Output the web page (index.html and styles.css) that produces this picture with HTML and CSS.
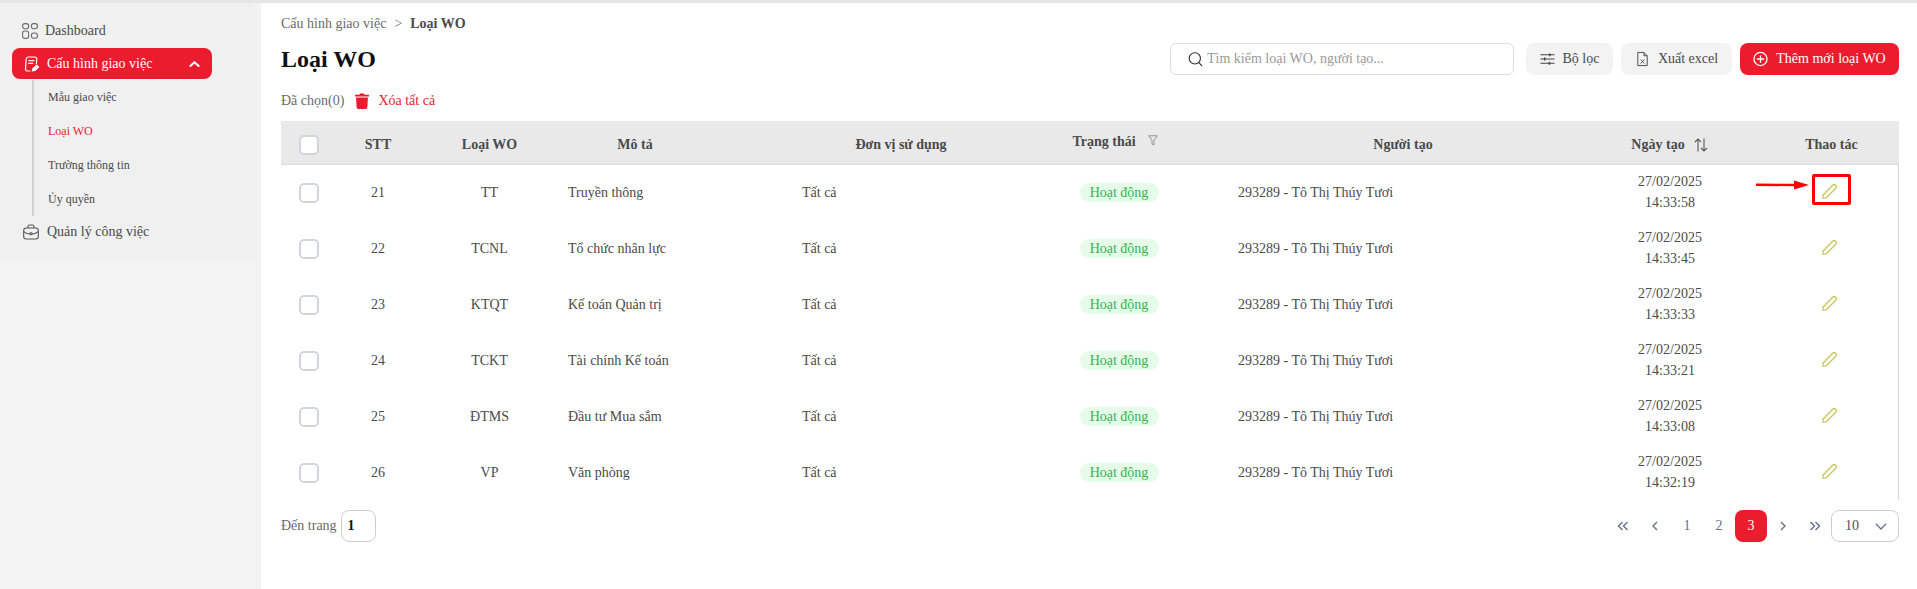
FILE: index.html
```html
<!DOCTYPE html>
<html lang="vi">
<head>
<meta charset="utf-8">
<title>Loại WO</title>
<link rel="stylesheet" href="styles.css">
</head>
<body>
<div class="topbar"></div>
<div class="layout">
  <aside class="aside">
    <nav class="nav">
      <a class="nav-item nav-first">
        <svg class="nav-icon" viewBox="0 0 16 16" fill="none" stroke="#6b6b6b" stroke-width="1.1"><rect x="0.6" y="0.6" width="6" height="5.2" rx="2.2"/><rect x="9.4" y="0.6" width="6" height="5.2" rx="2.2"/><rect x="0.6" y="8" width="6" height="7.4" rx="2.2"/><rect x="9.4" y="10" width="6" height="5.2" rx="2.2"/></svg>
        <span>Dashboard</span>
      </a>
      <a class="nav-item nav-active">
        <svg class="nav-icon nav-icon-active" viewBox="0 0 16 16" fill="none" stroke="#fff" stroke-width="1.2" stroke-linecap="round"><path d="M6 15H3.2C2 15 1.4 14.2 1.5 13L2.2 3C2.3 1.7 3 1 4.2 1H10.5C12 1 13 2 12.8 3.4L12.3 8"/><path d="M4.8 4.6H10M4.8 7.4H8.6"/><path d="M8.5 14.8L9 12.6L12.7 9.2L14.6 11L11 14.4Z" fill="#fff"/></svg>
        <span>Cấu hình giao việc</span>
        <svg class="nav-chevron" viewBox="0 0 12 8" fill="none" stroke="#fff" stroke-width="2.2" stroke-linecap="round" stroke-linejoin="round"><path d="M1.5 6.2L6 2L10.5 6.2"/></svg>
      </a>
      <div class="subnav">
        <a class="sub-item">Mẫu giao việc</a>
        <a class="sub-item sub-active">Loại WO</a>
        <a class="sub-item">Trường thông tin</a>
        <a class="sub-item">Ủy quyền</a>
      </div>
      <a class="nav-item nav-last">
        <svg class="nav-icon nav-icon-case" viewBox="0 0 16 16" fill="none" stroke="#555" stroke-width="1.1" stroke-linejoin="round"><path d="M5 4V2.6C5 1.7 5.7 1 6.6 1H9.4C10.3 1 11 1.7 11 2.6V4"/><rect x="0.7" y="4" width="14.6" height="11" rx="2.4"/><path d="M0.8 7.6C3 9.4 5.4 10 7 10M15.2 7.6C13 9.4 10.6 10 9 10"/><rect x="7" y="8.8" width="2" height="2" rx="0.6"/></svg>
        <span>Quản lý công việc</span>
      </a>
    </nav>
  </aside>

  <main class="main">
    <div class="breadcrumb"><span>Cấu hình giao việc</span><span class="crumb-sep">&gt;</span><strong>Loại WO</strong></div>

    <div class="title-row">
      <h1 class="title">Loại WO</h1>
      <div class="toolbar">
        <label class="search">
          <svg class="search-icon" viewBox="0 0 16 16" fill="none" stroke="#333" stroke-width="1.2" stroke-linecap="round"><circle cx="7.3" cy="7.3" r="6"/><path d="M11.6 11.8L14.6 15"/></svg>
          <input class="search-input" type="text" placeholder="Tìm kiếm loại WO, người tạo...">
        </label>
        <button class="btn btn-filter">
          <svg class="btn-icon" viewBox="0 0 16 16" fill="none" stroke="#444" stroke-width="1.1"><path d="M0.5 3.5H15.5M0.5 8H15.5M0.5 12.5H15.5"/><path d="M10.5 2V5M5 6.5V9.5M10 11V14" stroke-width="1.6"/></svg>
          Bộ lọc
        </button>
        <button class="btn btn-excel">
          <svg class="btn-icon" viewBox="0 0 16 16" fill="none" stroke="#444" stroke-width="1" stroke-linejoin="round"><path d="M3 1H9.5L13 4.5V15H3Z"/><path d="M9.5 1V4.5H13"/><path d="M6 8.5L10 12.8M10 8.5L6 12.8"/></svg>
          Xuất excel
        </button>
        <button class="btn btn-primary">
          <svg class="btn-icon" viewBox="0 0 16 16" fill="none" stroke="#fff" stroke-width="1.4" stroke-linecap="round"><circle cx="8" cy="8" r="7"/><path d="M8 4.6V11.4M4.6 8H11.4"/></svg>
          Thêm mới loại WO
        </button>
      </div>
    </div>

    <div class="selected-row">
      <span>Đã chọn(0)</span>
      <svg class="trash" viewBox="0 0 14 16" fill="#ec1c2e"><path d="M5 0.5H9L9.6 1.8H13.4C13.8 1.8 14 2.1 14 2.4V3.4H0V2.4C0 2.1 0.2 1.8 0.6 1.8H4.4Z"/><path d="M1 4.6H13L12.3 14.6C12.2 15.4 11.7 16 10.8 16H3.2C2.3 16 1.8 15.4 1.7 14.6Z"/></svg>
      <span class="danger">Xóa tất cả</span>
    </div>

    <div class="table-wrap">
      <table class="table">
        <colgroup>
          <col class="c1"><col class="c2"><col class="c3"><col class="c4"><col class="c5"><col class="c6"><col class="c7"><col class="c8"><col class="c9">
        </colgroup>
        <thead>
          <tr>
            <th><span class="checkbox"></span></th>
            <th>STT</th>
            <th>Loại WO</th>
            <th class="th-desc">Mô tả</th>
            <th>Đơn vị sử dụng</th>
            <th class="th-raised">Trạng thái<svg class="th-funnel" viewBox="0 0 10 11" fill="none" stroke="#8a8a8a" stroke-width="0.9" stroke-linejoin="round"><path d="M0.6 0.8H9.4L6 5.2V10L4 9V5.2Z"/></svg></th>
            <th>Người tạo</th>
            <th>Ngày tạo<svg class="th-sort" viewBox="0 0 16 14" fill="none" stroke="#5a5a5a" stroke-width="1.1"><path d="M5 13.5V1M2 4L5 1L8 4"/><path d="M11 0.5V13M8 10L11 13L14 10"/></svg></th>
            <th>Thao tác</th>
          </tr>
        </thead>
        <tbody>
          <tr><td><span class="checkbox"></span></td><td>21</td><td>TT</td><td class="left">Truyền thông</td><td class="left">Tất cả</td><td><span class="pill">Hoạt động</span></td><td class="left">293289 - Tô Thị Thúy Tươi</td><td>27/02/2025<br>14:33:58</td><td><svg class="pencil" viewBox="0 0 14 14" fill="none" stroke="#c9c458" stroke-width="1.2" stroke-linejoin="round"><path d="M0.8 13.2L1 10.2L10 1.2C10.8 0.4 12 0.4 12.8 1.2C13.6 2 13.6 3.2 12.8 4L3.8 13Z"/></svg></td></tr>
          <tr><td><span class="checkbox"></span></td><td>22</td><td>TCNL</td><td class="left">Tổ chức nhân lực</td><td class="left">Tất cả</td><td><span class="pill">Hoạt động</span></td><td class="left">293289 - Tô Thị Thúy Tươi</td><td>27/02/2025<br>14:33:45</td><td><svg class="pencil" viewBox="0 0 14 14" fill="none" stroke="#c9c458" stroke-width="1.2" stroke-linejoin="round"><path d="M0.8 13.2L1 10.2L10 1.2C10.8 0.4 12 0.4 12.8 1.2C13.6 2 13.6 3.2 12.8 4L3.8 13Z"/></svg></td></tr>
          <tr><td><span class="checkbox"></span></td><td>23</td><td>KTQT</td><td class="left">Kế toán Quản trị</td><td class="left">Tất cả</td><td><span class="pill">Hoạt động</span></td><td class="left">293289 - Tô Thị Thúy Tươi</td><td>27/02/2025<br>14:33:33</td><td><svg class="pencil" viewBox="0 0 14 14" fill="none" stroke="#c9c458" stroke-width="1.2" stroke-linejoin="round"><path d="M0.8 13.2L1 10.2L10 1.2C10.8 0.4 12 0.4 12.8 1.2C13.6 2 13.6 3.2 12.8 4L3.8 13Z"/></svg></td></tr>
          <tr><td><span class="checkbox"></span></td><td>24</td><td>TCKT</td><td class="left">Tài chính Kế toán</td><td class="left">Tất cả</td><td><span class="pill">Hoạt động</span></td><td class="left">293289 - Tô Thị Thúy Tươi</td><td>27/02/2025<br>14:33:21</td><td><svg class="pencil" viewBox="0 0 14 14" fill="none" stroke="#c9c458" stroke-width="1.2" stroke-linejoin="round"><path d="M0.8 13.2L1 10.2L10 1.2C10.8 0.4 12 0.4 12.8 1.2C13.6 2 13.6 3.2 12.8 4L3.8 13Z"/></svg></td></tr>
          <tr><td><span class="checkbox"></span></td><td>25</td><td>ĐTMS</td><td class="left">Đầu tư Mua sắm</td><td class="left">Tất cả</td><td><span class="pill">Hoạt động</span></td><td class="left">293289 - Tô Thị Thúy Tươi</td><td>27/02/2025<br>14:33:08</td><td><svg class="pencil" viewBox="0 0 14 14" fill="none" stroke="#c9c458" stroke-width="1.2" stroke-linejoin="round"><path d="M0.8 13.2L1 10.2L10 1.2C10.8 0.4 12 0.4 12.8 1.2C13.6 2 13.6 3.2 12.8 4L3.8 13Z"/></svg></td></tr>
          <tr><td><span class="checkbox"></span></td><td>26</td><td>VP</td><td class="left">Văn phòng</td><td class="left">Tất cả</td><td><span class="pill">Hoạt động</span></td><td class="left">293289 - Tô Thị Thúy Tươi</td><td>27/02/2025<br>14:32:19</td><td><svg class="pencil" viewBox="0 0 14 14" fill="none" stroke="#c9c458" stroke-width="1.2" stroke-linejoin="round"><path d="M0.8 13.2L1 10.2L10 1.2C10.8 0.4 12 0.4 12.8 1.2C13.6 2 13.6 3.2 12.8 4L3.8 13Z"/></svg></td></tr>
        </tbody>
      </table>
    </div>

    <div class="footer">
      <div class="goto">
        <span>Đến trang</span>
        <span class="goto-input">1</span>
      </div>
      <div class="pager">
        <a class="page"><svg class="page-icon" viewBox="0 0 12 10" fill="none" stroke="#667085" stroke-width="1.4"><path d="M5.5 1L1.5 5L5.5 9M10.5 1L6.5 5L10.5 9"/></svg></a>
        <a class="page"><svg class="page-icon" viewBox="0 0 12 10" fill="none" stroke="#667085" stroke-width="1.4"><path d="M8 1L4 5L8 9"/></svg></a>
        <a class="page">1</a>
        <a class="page">2</a>
        <a class="page page-current">3</a>
        <a class="page"><svg class="page-icon" viewBox="0 0 12 10" fill="none" stroke="#667085" stroke-width="1.4"><path d="M4 1L8 5L4 9"/></svg></a>
        <a class="page"><svg class="page-icon" viewBox="0 0 12 10" fill="none" stroke="#667085" stroke-width="1.4"><path d="M1.5 1L5.5 5L1.5 9M6.5 1L10.5 5L6.5 9"/></svg></a>
        <div class="page-size"><span>10</span><svg class="page-size-icon" viewBox="0 0 12 7" fill="none" stroke="#667085" stroke-width="1.3"><path d="M0.8 0.8L6 6L11.2 0.8"/></svg></div>
      </div>
    </div>
  </main>
</div>

<div class="mark-box"></div>
<svg class="mark-arrow" viewBox="0 0 53 10" fill="#f00"><path d="M0 3.6L38 3.8V0.5L53 5L38 9.5V6.2L0 6Z"/></svg>
</body>
</html>
```
FILE: styles.css
```css
* { box-sizing: border-box; }
html, body { margin: 0; padding: 0; height: 100%; overflow: hidden; }
body {
  background: #fff;
  color: #4a4a4a;
  font-family: "Liberation Serif", "Times New Roman", serif;
  font-size: 14px;
  position: relative;
}
a { color: inherit; text-decoration: none; }

.topbar {
  height: 3px;
  background: #e6e6e6;
}
.layout {
  display: flex;
  height: 586px;
}

/* sidebar */
.aside {
  width: 261px;
  flex: none;
  background: #f3f3f3;
}
.nav {
  width: 255px;
  height: 257px;
  background: #f0f0f0;
  padding: 12px 43px 0 12px;
}
.nav-item {
  display: flex;
  align-items: center;
  height: 31px;
}
.nav-first { padding-left: 10px; margin-bottom: 2px; gap: 7px; }
.nav-first, .nav-last { color: #4a4a4a; }
.nav-icon { width: 16px; height: 16px; flex: none; }
.nav-active {
  background: #ec1c2e;
  color: #fff;
  border-radius: 8px;
  padding: 0 12px 0 12px;
  gap: 7px;
}
.nav-chevron { width: 11px; height: 8px; margin-left: auto; }
.subnav {
  margin: 1px 0 0 20px;
  border-left: 2px solid #d2d2d2;
  width: 180px;
}
.sub-item {
  display: flex;
  align-items: center;
  height: 34px;
  padding-left: 14px;
  font-size: 12px;
}
.sub-active { color: #ec1c2e; }
.nav-last { padding-left: 11px; gap: 8px; }

/* main */
.main {
  flex: 1;
  min-width: 0;
  padding: 0 18px 0 20px;
}
.breadcrumb {
  display: flex;
  align-items: center;
  height: 16px;
  margin-top: 13px;
  color: #6b6b6b;
}
.crumb-sep { margin: 0 8px; }
.breadcrumb strong { color: #4a4a4a; }
.title-row {
  display: flex;
  align-items: center;
  justify-content: space-between;
  margin-top: 11px;
  height: 32px;
}
.title {
  margin: 0;
  font-size: 24px;
  line-height: 32px;
  color: #111;
}
.toolbar { display: flex; align-items: center; gap: 8px; }
.search {
  display: flex;
  align-items: center;
  width: 344px;
  height: 32px;
  margin-right: 4px;
  padding-left: 17px;
  border: 1px solid #dedede;
  border-radius: 6px;
  gap: 4px;
}
.search-icon { width: 15px; height: 16px; flex: none; }
.search-input {
  border: 0;
  outline: 0;
  flex: 1;
  min-width: 0;
  padding: 0;
  background: transparent;
  font: inherit;
}
.search-input::placeholder { color: #9a9a9a; opacity: 1; }
.btn {
  display: flex;
  align-items: center;
  justify-content: center;
  gap: 8px;
  height: 32px;
  padding: 0;
  border: 0;
  border-radius: 8px;
  background: #f3f3f3;
  color: #4a4a4a;
  font: inherit;
}
.btn-icon { width: 15px; height: 16px; flex: none; }
.btn-filter { width: 87px; }
.btn-excel { width: 111px; }
.btn-primary { width: 159px; background: #ec1c2e; color: #fff; }

.selected-row {
  display: flex;
  align-items: center;
  height: 18px;
  margin-top: 17px;
  color: #6b6b6b;
}
.trash { width: 14px; height: 16px; margin: 0 9px 0 11px; }
.danger { color: #ec1c2e; }

/* table */
.table-wrap {
  margin-top: 11px;
  height: 379px;
  position: relative;
}
.table-wrap::after {
  content: "";
  position: absolute;
  top: 43px;
  right: 0;
  bottom: 0;
  width: 1px;
  background: #d6d6d6;
}
.table {
  width: 100%;
  table-layout: fixed;
  border-collapse: collapse;
}
.c1 { width: 56px; }
.c2 { width: 82px; }
.c3 { width: 141px; }
.c4 { width: 234px; }
.c5 { width: 214px; }
.c6 { width: 222px; }
.c7 { width: 346px; }
.c8 { width: 188px; }
.c9 { width: 135px; }
.table th {
  height: 43px;
  padding: 5px 0 0;
  background: #e9e9e9;
  border-bottom: 1px solid #dcdcdc;
  font-weight: 700;
  text-align: center;
  vertical-align: middle;
}
.table td {
  height: 56px;
  padding: 0;
  text-align: center;
  vertical-align: middle;
  line-height: 21px;
}
.table td.left { text-align: left; padding-left: 8px; }
.table .th-desc { padding-right: 84px; }
.table .th-raised { padding: 0 8px 0 0; }
.th-funnel { width: 10px; height: 11px; margin-left: 12px; }
.th-sort { width: 16px; height: 14px; margin-left: 8px; vertical-align: -3px; }
.checkbox {
  display: inline-block;
  width: 20px;
  height: 20px;
  background: #fff;
  border: 2px solid #d0d5dd;
  border-radius: 5px;
  vertical-align: middle;
}
.pill {
  display: inline-block;
  width: 79px;
  height: 19px;
  line-height: 19px;
  border-radius: 10px;
  background: #e6fbe8;
  color: #2fb457;
}
.pencil { width: 15px; height: 15px; display: block; margin: -2px auto 0; transform: translateX(-2px); }

/* footer */
.footer {
  display: flex;
  align-items: center;
  justify-content: space-between;
  margin-top: 10px;
  height: 32px;
}
.goto { display: flex; align-items: center; gap: 4px; color: #6b6b6b; }
.goto-input {
  display: flex;
  align-items: center;
  width: 35px;
  height: 32px;
  padding-left: 6px;
  border: 1px solid #cfcfcf;
  border-radius: 8px;
  color: #111;
  font-weight: 700;
}
.pager { display: flex; align-items: center; }
.page {
  display: flex;
  align-items: center;
  justify-content: center;
  width: 32px;
  height: 32px;
  color: #667085;
}
.page-current {
  background: #ec1c2e;
  color: #fff;
  border-radius: 8px;
}
.page-icon { width: 12px; height: 10px; }
.page-size {
  display: flex;
  align-items: center;
  justify-content: space-between;
  width: 68px;
  height: 32px;
  padding: 0 11px 0 13px;
  border: 1px solid #cfcfcf;
  border-radius: 8px;
  color: #475467;
}
.page-size-icon { width: 12px; height: 7px; }

/* red review annotation drawn over the screenshot */
.mark-box {
  position: absolute;
  left: 1812px;
  top: 174px;
  width: 39px;
  height: 31px;
  border: 3px solid #f00;
  border-radius: 2px;
}
.mark-arrow {
  position: absolute;
  left: 1756px;
  top: 180px;
  width: 53px;
  height: 10px;
}
```
